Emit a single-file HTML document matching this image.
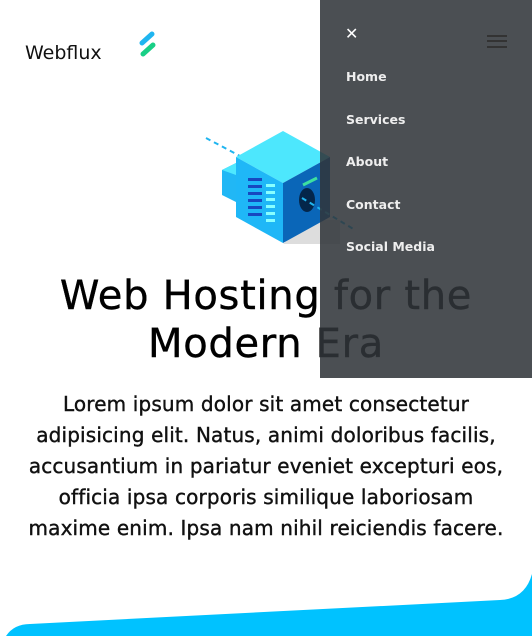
<!DOCTYPE html>
<html><head><style>
*{margin:0;padding:0;box-sizing:border-box}
body{width:532px;height:636px;overflow:hidden;background:#fff;position:relative;font-family:"DejaVu Sans",sans-serif}
.logo{position:absolute;left:25px;top:42px;font-size:19px;color:#111}
h1{position:absolute;left:0;width:532px;top:272px;text-align:center;font-size:40px;letter-spacing:0.7px;font-weight:normal;line-height:48px;color:#000;white-space:nowrap;-webkit-text-stroke:0.4px #000}
p{position:absolute;left:0;width:532px;top:389px;text-align:center;font-size:20px;letter-spacing:0.15px;line-height:31px;color:#111;white-space:nowrap;-webkit-text-stroke:0.4px #111}
.menu{position:absolute;left:320px;top:0;width:212px;height:378px;background:rgba(48,53,57,0.87)}
.menu a{position:absolute;left:26px;color:#eee;font-weight:bold;font-size:12.5px;text-decoration:none}
.x{position:absolute;left:25px;top:24px;color:#fff;font-size:16px}
.ham{position:absolute;left:167px;width:20px;height:2px;background:#333}
</style></head><body>
<div class="logo">Webflux</div>
<svg style="position:absolute;left:136px;top:30px" width="24" height="30"><line x1="6" y1="13" x2="16" y2="4" stroke="#1fb5f0" stroke-width="5" stroke-linecap="round"/><line x1="7" y1="24" x2="17" y2="15" stroke="#19cf86" stroke-width="5" stroke-linecap="round"/></svg>
<svg style="position:absolute;left:200px;top:120px" width="160" height="130">
<polygon points="83,124 140,124 140,100 110,100" fill="#ddd"/>
<line x1="6" y1="18" x2="40" y2="36" stroke="#1fb5f0" stroke-width="2" stroke-dasharray="5,4"/>
<polygon points="22,50 36,43 36,82 22,75" fill="#21b7f5"/>
<polygon points="22,50 36,43 46,48 36,55" fill="#4ee8ff"/>
<polygon points="36,37 83,11 130,37 83,63" fill="#4de7fd"/>
<polygon points="36,37 83,63 83,123 36,97" fill="#1fb7f7"/>
<polygon points="83,63 130,37 130,97 83,123" fill="#0a66b8"/>
<g fill="#1748c0"><rect x="48" y="58" width="14" height="3"/><rect x="48" y="65" width="14" height="3"/><rect x="48" y="72" width="14" height="3"/><rect x="48" y="79" width="14" height="3"/><rect x="48" y="86" width="14" height="3"/><rect x="48" y="93" width="14" height="3"/></g>
<g fill="#8ff"><rect x="66" y="64" width="9" height="3"/><rect x="66" y="71" width="9" height="3"/><rect x="66" y="78" width="9" height="3"/><rect x="66" y="85" width="9" height="3"/><rect x="66" y="92" width="9" height="3"/><rect x="66" y="99" width="9" height="3"/></g>
<ellipse cx="107" cy="80" rx="8" ry="12" fill="#04264a"/>
<line x1="103" y1="65" x2="117" y2="58" stroke="#3de0a0" stroke-width="3"/>
<line x1="102" y1="78" x2="155" y2="110" stroke="#1fb5f0" stroke-width="2" stroke-dasharray="5,4"/>
</svg>
<h1>Web Hosting for the<br>Modern Era</h1>
<p>Lorem ipsum dolor sit amet consectetur<br>adipisicing elit. Natus, animi doloribus facilis,<br>accusantium in pariatur eveniet excepturi eos,<br>officia ipsa corporis similique laboriosam<br>maxime enim. Ipsa nam nihil reiciendis facere.</p>
<div class="menu">
<div class="x">✕</div>
<div class="ham" style="top:35px"></div><div class="ham" style="top:40px"></div><div class="ham" style="top:46px"></div>
<a style="top:69px">Home</a><a style="top:112px">Services</a><a style="top:154px">About</a><a style="top:197px">Contact</a><a style="top:239px">Social Media</a>
</div>
<svg style="position:absolute;left:0;top:570px" width="532" height="66"><path d="M6,66 Q14,54 30,54 L500,30 Q525,29 532,4 L532,66 Z" fill="#00c2ff"/></svg>
</body></html>
